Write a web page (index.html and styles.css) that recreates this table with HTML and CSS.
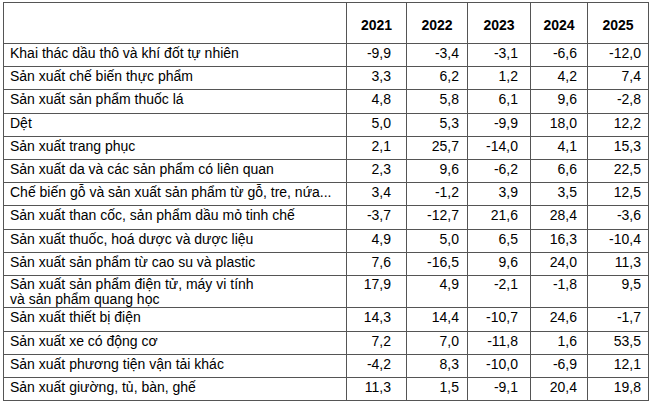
FILE: index.html
```html
<!DOCTYPE html>
<html lang="vi">
<head>
<meta charset="utf-8">
<title>Bảng</title>
<link rel="stylesheet" href="styles.css">
</head>
<body>
<div class="wrap">
<table class="tbl">
<colgroup>
<col class="c-name"><col class="c-y1"><col class="c-y2"><col class="c-y3"><col class="c-y4"><col class="c-y5">
</colgroup>
<thead>
<tr class="head"><th></th><th>2021</th><th>2022</th><th>2023</th><th>2024</th><th>2025</th></tr>
</thead>
<tbody>
<tr><td>Khai thác dầu thô và khí đốt tự nhiên</td><td>-9,9</td><td>-3,4</td><td>-3,1</td><td>-6,6</td><td>-12,0</td></tr>
<tr><td>Sản xuất chế biến thực phẩm</td><td>3,3</td><td>6,2</td><td>1,2</td><td>4,2</td><td>7,4</td></tr>
<tr><td>Sản xuất sản phẩm thuốc lá</td><td>4,8</td><td>5,8</td><td>6,1</td><td>9,6</td><td>-2,8</td></tr>
<tr><td>Dệt</td><td>5,0</td><td>5,3</td><td>-9,9</td><td>18,0</td><td>12,2</td></tr>
<tr><td>Sản xuất trang phục</td><td>2,1</td><td>25,7</td><td>-14,0</td><td>4,1</td><td>15,3</td></tr>
<tr><td>Sản xuất da và các sản phẩm có liên quan</td><td>2,3</td><td>9,6</td><td>-6,2</td><td>6,6</td><td>22,5</td></tr>
<tr><td>Chế biến gỗ và sản xuất sản phẩm từ gỗ, tre, nứa...</td><td>3,4</td><td>-1,2</td><td>3,9</td><td>3,5</td><td>12,5</td></tr>
<tr><td>Sản xuất than cốc, sản phẩm dầu mỏ tinh chế</td><td>-3,7</td><td>-12,7</td><td>21,6</td><td>28,4</td><td>-3,6</td></tr>
<tr><td>Sản xuất thuốc, hoá dược và dược liệu</td><td>4,9</td><td>5,0</td><td>6,5</td><td>16,3</td><td>-10,4</td></tr>
<tr><td>Sản xuất sản phẩm từ cao su và plastic</td><td>7,6</td><td>-16,5</td><td>9,6</td><td>24,0</td><td>11,3</td></tr>
<tr class="double"><td>Sản xuất sản phẩm điện tử, máy vi tính<br>và sản phẩm quang học</td><td>17,9</td><td>4,9</td><td>-2,1</td><td>-1,8</td><td>9,5</td></tr>
<tr><td>Sản xuất thiết bị điện</td><td>14,3</td><td>14,4</td><td>-10,7</td><td>24,6</td><td>-1,7</td></tr>
<tr><td>Sản xuất xe có động cơ</td><td>7,2</td><td>7,0</td><td>-11,8</td><td>1,6</td><td>53,5</td></tr>
<tr><td>Sản xuất phương tiện vận tải khác</td><td>-4,2</td><td>8,3</td><td>-10,0</td><td>-6,9</td><td>12,1</td></tr>
<tr><td>Sản xuất giường, tủ, bàn, ghế</td><td>11,3</td><td>1,5</td><td>-9,1</td><td>20,4</td><td>19,8</td></tr>
</tbody>
</table>
</div>
</body>
</html>
```
FILE: styles.css
```css
html, body {
  margin: 0;
  padding: 0;
  background: #ffffff;
}
.wrap {
  padding: 2px 0 0 3px;
}
.tbl {
  border-collapse: collapse;
  table-layout: fixed;
  width: 646px;
  font-family: "Liberation Sans", Arial, sans-serif;
  font-size: 14px;
  color: #000;
}
.c-name { width: 343px; }
.c-y1 { width: 60px; }
.c-y2 { width: 61px; }
.c-y3 { width: 63px; }
.c-y4 { width: 57px; }
.c-y5 { width: 61px; }
.tbl th, .tbl td {
  border: 1px solid #555;
  line-height: 15px;
  vertical-align: top;
  padding: 2px 0 0 0;
  white-space: nowrap;
}
.tbl tbody td {
  height: 20.2px;
  text-align: right;
}
.tbl tbody td:first-child {
  text-align: left;
  padding-left: 6px;
}
.tbl tbody td:nth-child(2) { padding-right: 15px; }
.tbl tbody td:nth-child(3) { padding-right: 8px; }
.tbl tbody td:nth-child(4) { padding-right: 12px; }
.tbl tbody td:nth-child(5) { padding-right: 10px; }
.tbl tbody td:nth-child(6) { padding-right: 7px; }
.tbl tbody tr.double td {
  height: 30.6px;
  padding-top: 1px;
}
.tbl .head th {
  height: 25px;
  padding-top: 15px;
  font-weight: bold;
  text-align: center;
}
```
